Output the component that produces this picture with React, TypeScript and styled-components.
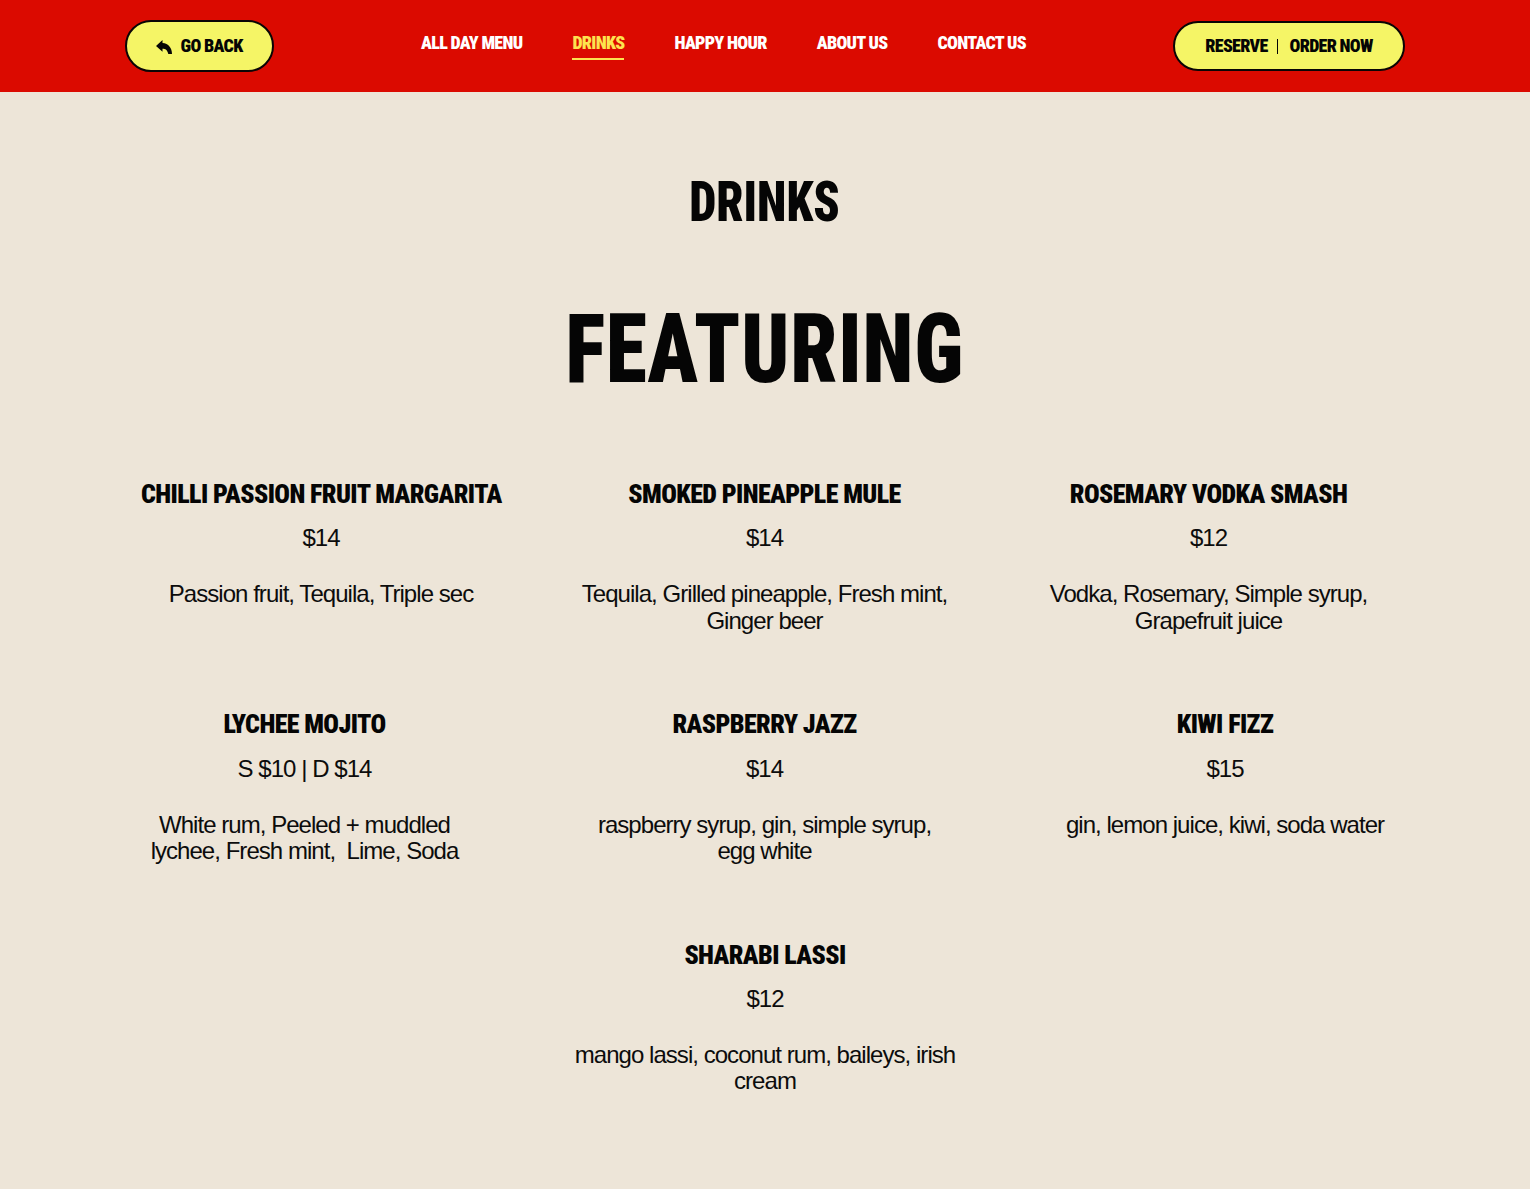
import React from 'react';
import styled, { createGlobalStyle } from 'styled-components';

const GlobalStyle = createGlobalStyle`
  html, body {
    margin: 0;
    padding: 0;
    background: #ede5d8;
    overflow: hidden;
  }
  body {
    height: 1189px;
    font-family: "Liberation Sans", Arial, sans-serif;
  }
`;

const display = `"Roboto Condensed", Roboto, sans-serif`;

const Header = styled.header`
  height: 92px;
  background: #db0a00;
  display: flex;
  justify-content: center;
`;

const HeaderInner = styled.div`
  width: 1280px;
  display: flex;
  align-items: center;
  justify-content: space-between;
`;

const PillButton = styled.a<{ $w: number; $h: number }>`
  box-sizing: border-box;
  width: ${(p) => p.$w}px;
  height: ${(p) => p.$h}px;
  padding-bottom: 2px;
  border: 2px solid #0a0505;
  border-radius: 26px;
  background: #f5f566;
  color: #050505;
  display: flex;
  align-items: center;
  justify-content: center;
  font-family: ${display};
  font-stretch: 75%;
  font-weight: 900;
  font-size: 18px;
  letter-spacing: -0.7px;
  white-space: nowrap;
`;

const BackIcon = styled.svg`
  width: 16px;
  height: 14px;
  margin-right: 8px;
  margin-top: 4px;
`;

const Divider = styled.span`
  width: 1px;
  height: 15px;
  background: #050505;
  margin: 2px 11px 0 10px;
`;

const Nav = styled.nav`
  display: flex;
  gap: 50px;
  margin-top: -6px;
`;

const NavLink = styled.a<{ $active?: boolean }>`
  height: 34px;
  box-sizing: border-box;
  padding-top: 6px;
  font-family: ${display};
  font-stretch: 75%;
  font-weight: 900;
  font-size: 18px;
  line-height: 22px;
  letter-spacing: -0.7px;
  color: ${(p) => (p.$active ? '#fde24f' : '#ffffff')};
  border-bottom: 2px solid ${(p) => (p.$active ? '#fde24f' : 'transparent')};
  white-space: nowrap;
`;

const Main = styled.main`
  padding: 0 141px;
`;

const PageTitle = styled.h1`
  margin: 0;
  padding-top: 80px;
  text-align: center;
  font-family: ${display};
  font-stretch: 75%;
  font-weight: 900;
  font-size: 56px;
  line-height: 60px;
  color: #050505;
`;

const SectionTitle = styled.h2`
  margin: 0;
  padding-top: 62px;
  text-align: center;
  font-family: ${display};
  font-stretch: 75%;
  font-weight: 900;
  font-size: 97px;
  line-height: 110px;
  letter-spacing: 1px;
  color: #050505;
`;

// Pulls a heading's letters a little narrower than the font allows
const Condensed = styled.span<{ $x: number }>`
  display: inline-block;
  transform: scaleX(${(p) => p.$x});
`;

const MenuRow = styled.div<{ $center?: boolean }>`
  display: flex;
  justify-content: ${(p) => (p.$center ? 'center' : 'space-between')};
  height: 230.4px;
`;

const Rows = styled.div`
  margin-top: 74px;
`;

const Item = styled.article<{ $w: number }>`
  width: ${(p) => p.$w}px;
  text-align: center;
`;

const ItemName = styled.h3`
  margin: 0;
  font-family: ${display};
  font-stretch: 75%;
  font-weight: 900;
  font-size: 26px;
  line-height: 32px;
  letter-spacing: -0.6px;
  color: #050505;
  white-space: nowrap;
`;

const Price = styled.p`
  margin: 14.2px 0 0;
  font-size: 24px;
  line-height: 27px;
  letter-spacing: -0.96px;
  color: #0c0c0c;
`;

const Description = styled.p`
  margin: 30.1px 0 0;
  font-size: 24px;
  line-height: 26.4px;
  letter-spacing: -0.96px;
  color: #0c0c0c;
  white-space: pre-wrap;
`;

const rows = [
  {
    widths: [360, 390, 361],
    items: [
      { name: 'Chilli Passion Fruit Margarita', price: '$14', desc: 'Passion fruit, Tequila, Triple sec' },
      { name: 'Smoked Pineapple Mule', price: '$14', desc: 'Tequila, Grilled pineapple, Fresh mint, Ginger beer' },
      { name: 'Rosemary Vodka Smash', price: '$12', desc: 'Vodka, Rosemary, Simple syrup, Grapefruit juice' },
    ],
  },
  {
    widths: [327, 350, 328],
    items: [
      { name: 'Lychee Mojito', price: 'S $10 | D $14', desc: 'White rum, Peeled + muddled lychee, Fresh mint,  Lime, Soda' },
      { name: 'Raspberry Jazz', price: '$14', desc: 'raspberry syrup, gin, simple syrup, egg white' },
      { name: 'Kiwi Fizz', price: '$15', desc: 'gin, lemon juice, kiwi, soda water' },
    ],
  },
  {
    widths: [400],
    items: [
      { name: 'Sharabi Lassi', price: '$12', desc: 'mango lassi, coconut rum, baileys, irish cream' },
    ],
  },
];

const navItems = ['All Day Menu', 'Drinks', 'Happy Hour', 'About Us', 'Contact Us'];

export default function App() {
  return (
    <>
      <GlobalStyle />
      <Header>
        <HeaderInner>
          <PillButton $w={149} $h={52}>
            <BackIcon viewBox="0 0 16 14">
              <path d="M6.5 0 L0 6 L6.5 11.8 L6.5 8.8 C9.5 8.8 11.3 10 12.3 14 L16 14 C16 8 12.5 3.4 6.5 3 Z" fill="#050505" />
            </BackIcon>
            GO BACK
          </PillButton>
          <Nav>
            {navItems.map((item) => (
              <NavLink key={item} $active={item === 'Drinks'}>
                {item.toUpperCase()}
              </NavLink>
            ))}
          </Nav>
          <PillButton $w={232} $h={50}>
            RESERVE
            <Divider />
            ORDER NOW
          </PillButton>
        </HeaderInner>
      </Header>
      <Main>
        <PageTitle>
          <Condensed $x={0.86}>DRINKS</Condensed>
        </PageTitle>
        <SectionTitle>
          <Condensed $x={0.86}>FEATURING</Condensed>
        </SectionTitle>
        <Rows>
          {rows.map((row, r) => (
            <MenuRow key={r} $center={row.items.length === 1}>
              {row.items.map((item, i) => (
                <Item key={item.name} $w={row.widths[i]}>
                  <ItemName>{item.name.toUpperCase()}</ItemName>
                  <Price>{item.price}</Price>
                  <Description>{item.desc}</Description>
                </Item>
              ))}
            </MenuRow>
          ))}
        </Rows>
      </Main>
    </>
  );
}
